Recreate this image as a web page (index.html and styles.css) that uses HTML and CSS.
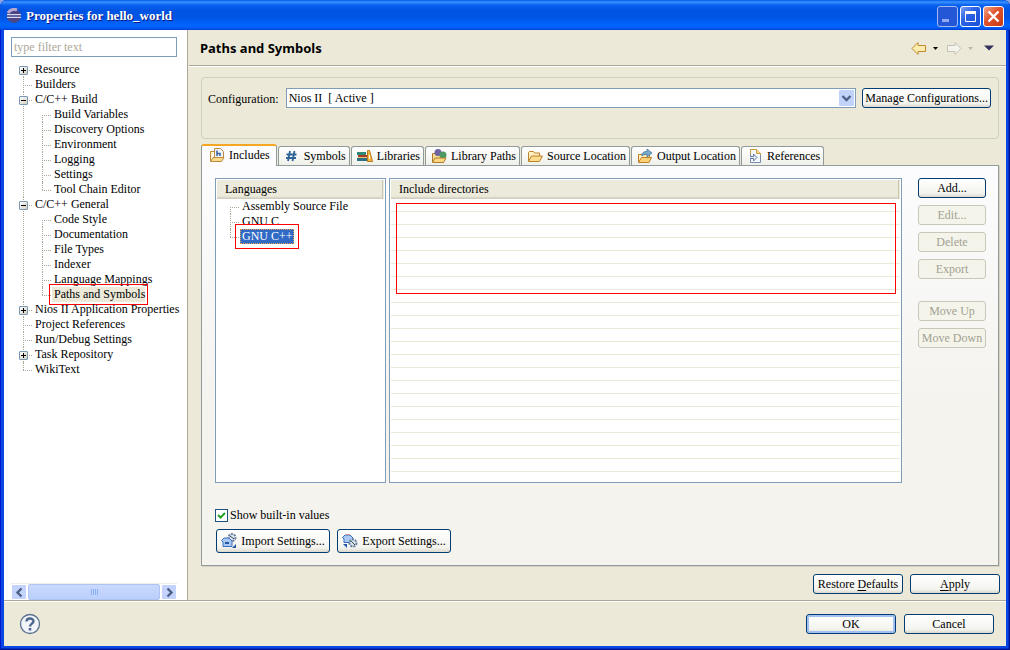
FILE: index.html
```html
<!DOCTYPE html>
<html lang="en">
<head>
<meta charset="utf-8">
<title>Properties for hello_world</title>
<link rel="stylesheet" href="styles.css">
</head>
<body>
<div class="window">
  <header class="titlebar">
    <svg class="logo" width="16" height="16" viewBox="0 0 16 16"><circle cx="8" cy="8" r="7" fill="#4b4787"/><path d="M2 5a7 7 0 0 1 9-3" stroke="#b9a9d0" stroke-width="3" fill="none"/><path d="M1 6.500h14M1 9.500h14" stroke="#d9dcf0"/><path d="M1 8h14" stroke="#7f86bb"/></svg>
    <h1 class="title">Properties for hello_world</h1>
    <button class="caption-button is-dim" aria-label="Minimize"><svg width="19" height="19" viewBox="0 0 19 19"><path d="M4 12h7v3H4z" fill="#8fa9f4"/></svg></button>
    <button class="caption-button" aria-label="Maximize"><svg width="19" height="19" viewBox="0 0 19 19"><path d="M4.500 4.500h10v10h-10z" fill="none" stroke="#fff"/><path d="M4 5.500h11" stroke="#fff" stroke-width="3"/></svg></button>
    <button class="caption-button is-close" aria-label="Close"><svg width="19" height="19" viewBox="0 0 19 19"><path d="M4.500 4.500l10 10M14.500 4.500l-10 10" stroke="#fff" stroke-width="2.400"/></svg></button>
  </header>

  <div class="content">
    <aside class="sidebar">
      <input class="filter" type="text" placeholder="type filter text" aria-label="Filter">
      <ul class="tree">
        <li><span class="row"><button class="toggle" aria-label="Expand"></button>Resource</span></li>
        <li><span class="row">Builders</span></li>
        <li><span class="row"><button class="toggle is-open" aria-label="Collapse"></button>C/C++ Build</span>
          <ul>
            <li><span class="row">Build Variables</span></li>
            <li><span class="row">Discovery Options</span></li>
            <li><span class="row">Environment</span></li>
            <li><span class="row">Logging</span></li>
            <li><span class="row">Settings</span></li>
            <li><span class="row">Tool Chain Editor</span></li>
          </ul>
        </li>
        <li><span class="row"><button class="toggle is-open" aria-label="Collapse"></button>C/C++ General</span>
          <ul>
            <li><span class="row">Code Style</span></li>
            <li><span class="row">Documentation</span></li>
            <li><span class="row">File Types</span></li>
            <li><span class="row">Indexer</span></li>
            <li><span class="row">Language Mappings</span></li>
            <li><span class="row"><span class="current">Paths and Symbols</span></span></li>
          </ul>
        </li>
        <li><span class="row"><button class="toggle" aria-label="Expand"></button>Nios II Application Properties</span></li>
        <li><span class="row">Project References</span></li>
        <li><span class="row">Run/Debug Settings</span></li>
        <li><span class="row"><button class="toggle" aria-label="Expand"></button>Task Repository</span></li>
        <li><span class="row">WikiText</span></li>
      </ul>
      <div class="scrollbar">
        <button class="scroll-button" aria-label="Scroll left"><svg width="13" height="13" viewBox="0 0 13 13"><path d="M8.500 2.500l-4 4 4 4" fill="none" stroke="#4d6185" stroke-width="2.400"/></svg></button>
        <div class="thumb"><i></i><i></i><i></i><i></i></div>
        <button class="scroll-button" aria-label="Scroll right"><svg width="13" height="13" viewBox="0 0 13 13"><path d="M4.500 2.500l4 4-4 4" fill="none" stroke="#4d6185" stroke-width="2.400"/></svg></button>
      </div>
    </aside>

    <main class="page">
      <div class="page-head">
        <h2 class="page-title">Paths and Symbols</h2>
        <button class="nav" aria-label="Back"><svg width="16" height="14" viewBox="0 0 16 14"><path d="M1 7.500L7 1.500V4.500h7.500v6H7v3z" fill="#fdecb0" stroke="#c08a2c"/></svg></button>
        <button class="nav nav-menu" aria-label="Back history"><svg width="5" height="3" viewBox="0 0 5 3"><path d="M0 0h5L2.500 3z" fill="#000"/></svg></button>
        <button class="nav nav-forward" aria-label="Forward"><svg width="16" height="14" viewBox="0 0 16 14"><path d="M15 7.500L9 1.500V4.500H1.500v6H9v3z" fill="#f4f3ec" stroke="#c4c2b8"/></svg></button>
        <button class="nav nav-menu" aria-label="Forward history"><svg width="5" height="3" viewBox="0 0 5 3"><path d="M0 0h5L2.500 3z" fill="#b9b7aa"/></svg></button>
        <button class="nav nav-view" aria-label="View menu"><svg width="10" height="6" viewBox="0 0 10 6"><path d="M0 .5h10L5 5.500z" fill="#33305e"/></svg></button>
      </div>

      <div class="page-body">
        <section class="config">
          <label for="config">Configuration:</label>
          <select id="config" class="select"><option>Nios II&nbsp; [ Active ]</option></select>
          <button class="button manage">Manage Configurations...</button>
        </section>

        <div class="tabs" role="tablist">
          <button class="tab is-active" role="tab" aria-selected="true"><svg width="16" height="16" viewBox="0 0 16 16"><path d="M1.500 14V4.500h4v-2" fill="#fff3c8" stroke="#c08a3c"/><path d="M5.500 1.500h6l3 3v7h-9z" fill="#edf3fb" stroke="#c08a3c"/><path d="M8 3.500v5.500M8 6.500h3V9" stroke="#3a639f" stroke-width="1.500" fill="none"/><path d="M1.500 14.500l2.500-4h11l-2.500 4z" fill="#fbdc8c" stroke="#c08a3c"/></svg>Includes</button>
          <button class="tab" role="tab"><svg width="16" height="16" viewBox="0 0 16 16"><path d="M6 3L4 13M10.500 3L8.500 13M2.500 6.500h10M2 10h10" stroke="#2f6597" stroke-width="1.800" fill="none"/></svg>Symbols</button>
          <button class="tab" role="tab"><svg width="16" height="16" viewBox="0 0 16 16"><path d="M0 4h9v3H0z" fill="#2f8a78"/><path d="M1 7h9v2H1z" fill="#a83a2a"/><path d="M1 9h9v1H1z" fill="#e7c66a"/><path d="M0 10h10v3H0z" fill="#2f6f86"/><path d="M10.500 2.500h2l3 11h-5z" fill="#f3b73f" stroke="#b9781e"/><path d="M12.500 7v4" stroke="#fff"/></svg>Libraries</button>
          <button class="tab" role="tab"><svg width="16" height="16" viewBox="0 0 16 16"><path d="M1.500 14V5.500h5l1 1.500h6v3" fill="#f8dc91" stroke="#b07a2c"/><circle cx="7" cy="4.500" r="3.500" fill="#6e62a3"/><circle cx="12" cy="7" r="3.500" fill="#4c9a62"/><path d="M1.500 14.500l2.500-4.500h11l-2.500 4.500z" fill="#fbd77f" stroke="#b07a2c"/></svg>Library Paths</button>
          <button class="tab" role="tab"><svg width="16" height="16" viewBox="0 0 16 16"><path d="M1.500 13V4.500l1-1h4l1 1.500h5v3" fill="#fff1c0" stroke="#c08028"/><path d="M1.500 13.500L4.500 8h11l-3 5.500z" fill="#fbdc8c" stroke="#c08028"/></svg>Source Location</button>
          <button class="tab" role="tab"><svg width="16" height="16" viewBox="0 0 16 16"><path d="M1.500 14V6.500h11v3" fill="#fff1c0" stroke="#c08028"/><path d="M1.500 14.500L4.500 9.500h10l-2.500 5z" fill="#fbd27a" stroke="#c08028"/><path d="M5 6c1-2 2.500-2.500 5-2.500V1l5 4-5 4V6.500C8 6.500 6.500 6.500 5 8z" fill="#79aacb" stroke="#4a7a9d" stroke-width=".8"/></svg>Output Location</button>
          <button class="tab" role="tab"><svg width="16" height="16" viewBox="0 0 16 16"><path d="M3.500 1.500h6l4 4v9h-10z" fill="#f4f8ff" stroke="#7b8ba8"/><path d="M3.500 6V1.500h6l4 4V7" fill="none" stroke="#cf9b3e"/><path d="M9.500 1.500v4h4" fill="#f6dd9a" stroke="#cf9b3e"/><path d="M3 8.500h3.500v-2.500L10 9.500l-3.500 3.500v-2.500H3" fill="#dfe7f3" stroke="#6d7f9f"/></svg>References</button>
        </div>

        <section class="panel">
          <div class="columns">
            <div class="list languages">
              <div class="list-head">Languages</div>
              <ul class="tree language-tree">
                <li><span class="row">Assembly Source File</span></li>
                <li><span class="row">GNU C</span></li>
                <li><span class="row"><span class="selected">GNU C++</span></span></li>
              </ul>
            </div>
            <div class="list directories">
              <div class="list-head">Include directories</div>
              <div class="lines"><div class="callout"></div></div>
            </div>
            <div class="actions">
              <button class="button">Add...</button>
              <button class="button" disabled>Edit...</button>
              <button class="button" disabled>Delete</button>
              <button class="button" disabled>Export</button>
              <button class="button move-up" disabled>Move Up</button>
              <button class="button" disabled>Move Down</button>
            </div>
          </div>
          <div class="options">
            <label class="check"><input type="checkbox" checked>Show built-in values</label>
            <div class="transfer">
              <button class="button"><svg width="16" height="16" viewBox="0 0 16 16"><circle cx="11" cy="4.500" r="3.500" fill="#dce6ee" stroke="#667f99" stroke-width="2" stroke-dasharray="2 1"/><path d="M9 3l4 3" stroke="#345"/><path d="M.5 7.500L3 5h5l3 3v5.500h-9V9z" fill="#a9c8f2" stroke="#3a6fbe"/><path d="M4 10h4" stroke="#2458a4" stroke-width="2"/><path d="M15 11v4h-4z" fill="#2458a4"/></svg>Import Settings...</button>
              <button class="button"><svg width="16" height="16" viewBox="0 0 16 16"><path d="M.5 4.500L3 2h5l3 3v4.500H2V6z" fill="#a9c8f2" stroke="#3a6fbe"/><path d="M4 1.500h4" stroke="#d7908c"/><circle cx="11" cy="10" r="3.500" fill="#dce6ee" stroke="#667f99" stroke-width="2" stroke-dasharray="2 1"/><path d="M9 8l4 4" stroke="#345"/><path d="M1 11h4v4z" fill="#2458a4"/></svg>Export Settings...</button>
            </div>
          </div>
        </section>

        <div class="page-actions">
          <button class="button"><span>Restore <u>D</u>efaults</span></button>
          <button class="button"><span><u>A</u>pply</span></button>
        </div>
      </div>
    </main>
  </div>

  <footer class="footer">
    <button class="help" aria-label="Help"><svg width="22" height="22" viewBox="0 0 22 22"><circle cx="11" cy="11" r="9.500" fill="#f1f4f8" stroke="#5b7290" stroke-width="1.300"/><path d="M7.500 8.500C7.500 4.500 14.500 4.500 14.500 8.300 14.500 10.500 11 10.800 11 13.500" fill="none" stroke="#4e678c" stroke-width="2.400"/><path d="M9.700 15h2.600v2.500H9.700z" fill="#4e678c"/></svg></button>
    <button class="button is-default">OK</button>
    <button class="button">Cancel</button>
  </footer>
</div>
</body>
</html>
```

FILE: styles.css
```css
* { box-sizing: border-box; }

body {
  margin: 0;
  background: #8aa5e0;
  color: #000;
  font: 12px/15px "Liberation Serif", "Times New Roman", serif;
}

button, input, select { font: inherit; color: inherit; }
button { padding: 0; border: 0; background: none; }
svg { display: block; flex: none; }
ul { margin: 0; padding: 0; list-style: none; }
u { text-underline-offset: 2px; }

/* Window frame */
.window {
  display: flex;
  flex-direction: column;
  min-height: 100vh;
  padding: 0 4px 4px;
  border-radius: 7px 7px 0 0;
  background: #0a46e4;
  box-shadow: inset -1px -1px #00138c, inset 1px 0 #0019cf, inset -2px -2px #0030c8;
}

.titlebar {
  display: flex;
  align-items: center;
  gap: 2px;
  height: 30px;
  margin: 0 -4px;
  padding: 2px 6px 0;
  border-radius: 7px 7px 0 0;
  background: linear-gradient(#0058e6 0, #3a93ff 2px, #0a62f0 5px, #0054e3 10px, #0055e5 18px, #0066ff 25px, #005cf5 28px, #003dd0);
}

.title {
  flex: 1;
  margin: 0 0 0 2px;
  color: #fff;
  font-size: 13px;
  line-height: 16px;
  text-shadow: 1px 1px #0a1883;
}

.caption-button {
  width: 21px;
  height: 21px;
  border: 1px solid #fff;
  border-radius: 3px;
  background: linear-gradient(135deg, #7a9ff5, #2c62e4 40%, #1b4fd6);
}
.caption-button.is-dim { border-color: #a5b8ee; background: #2457d6; }
.caption-button.is-close { background: linear-gradient(135deg, #f0a58c, #e0512c 45%, #c43c14); }

.content { display: flex; flex: 1; background: #ece9d8; }

/* Navigation tree */
.sidebar {
  display: flex;
  flex-direction: column;
  width: 184px;
  margin-right: 1px;
  padding: 7px 10px 0 7px;
  border-right: 1px solid #aca899;
  background: #fff;
}

.filter {
  width: 100%;
  height: 20px;
  margin-bottom: 5px;
  padding: 1px 2px;
  border: 1px solid #7f9db9;
  background: #fff;
}
.filter::placeholder { color: #aca899; opacity: 1; }

.tree { flex: 1; padding-left: 12px; }
.tree li { position: relative; }
.tree li::before {
  content: "";
  position: absolute;
  top: 0;
  bottom: 0;
  left: 0;
  border-left: 1px dotted #aca899;
}
.tree li:first-child::before { top: 8px; }
.tree li:last-child::before { bottom: auto; height: 8px; }
.tree ul { padding-left: 19px; }

.row {
  display: block;
  position: relative;
  padding-left: 12px;
  white-space: nowrap;
}
.row::before {
  content: "";
  position: absolute;
  top: 8px;
  left: 0;
  width: 9px;
  border-top: 1px dotted #aca899;
}

.toggle {
  position: absolute;
  top: 4px;
  left: -4px;
  width: 9px;
  height: 9px;
  border: 1px solid #7898b5;
  border-radius: 1px;
  background:
    linear-gradient(#000, #000) center / 5px 1px no-repeat,
    linear-gradient(#000, #000) center / 1px 5px no-repeat,
    linear-gradient(135deg, #fff, #d2ccbc);
}
.toggle.is-open {
  background:
    linear-gradient(#000, #000) center / 5px 1px no-repeat,
    linear-gradient(135deg, #fff, #d2ccbc);
}

.current {
  display: inline-block;
  margin-left: -2px;
  padding-left: 2px;
  background: #ece9d8;
  outline: 1px solid #f00;
  outline-offset: 2px;
}

.scrollbar { display: flex; gap: 1px; height: 17px; border-top: 1px solid #eeede5; }
.scroll-button {
  display: grid;
  place-items: center;
  width: 16px;
  border: 1px solid #fff;
  border-radius: 2px;
  background: #c3d3fd;
}
.thumb {
  display: flex;
  flex: 1;
  align-items: center;
  justify-content: center;
  gap: 1px;
  border: 1px solid #b0c4f2;
  border-radius: 2px;
  background: linear-gradient(#cad9fe, #bacffc);
}
.thumb i { width: 1px; height: 6px; background: #8cb0f8; }

/* Page */
.page { display: flex; flex: 1; flex-direction: column; min-width: 0; }

.page-head {
  display: flex;
  align-items: center;
  height: 36px;
  padding: 1px 12px 0 11px;
  border-bottom: 1px solid #aca899;
  box-shadow: 0 1px #fff;
}
.page-title {
  flex: 1;
  margin: 0;
  font: bold 13px/16px "Noto Sans", sans-serif;
}
.nav-menu { margin-left: 6px; }
.nav-forward { margin-left: 8px; }
.nav-view { margin-left: 11px; }

.page-body { display: flex; flex: 1; flex-direction: column; padding: 11px 7px 6px 12px; }

.config {
  display: flex;
  align-items: flex-start;
  gap: 6px;
  height: 62px;
  padding: 10px 7px 0 6px;
  border: 1px solid #d0d0bf;
  border-radius: 4px;
}
.config label { margin-top: 4px; margin-right: 1px; }

.select {
  flex: 1;
  height: 20px;
  padding: 0 2px;
  appearance: none;
  border: 1px solid #7f9db9;
  border-radius: 0;
  background:
    url("data:image/svg+xml,%3Csvg xmlns='http://www.w3.org/2000/svg' width='15' height='16'%3E%3Crect width='15' height='16' rx='1' fill='%23c1d2fb'/%3E%3Cpath d='M3.500 6l4 4 4-4' fill='none' stroke='%234d6185' stroke-width='2.400'/%3E%3C/svg%3E") right 1px center no-repeat,
    #fff;
}

.button {
  display: flex;
  align-items: center;
  justify-content: center;
  gap: 4px;
  height: 20px;
  padding: 0 2px;
  border: 1px solid #003c74;
  border-radius: 3px;
  background: linear-gradient(#fff, #f3f3ee 80%, #dcd8cd);
  white-space: nowrap;
}
.button:disabled { border-color: #c9c7ba; background: #f5f4ea; color: #a1a192; }
.button.is-default { box-shadow: inset 0 0 0 2px #a4bff2; }

/* Tabs */
.tabs { display: flex; align-items: flex-end; gap: 1px; margin-top: 5px; }
.tab {
  display: flex;
  align-items: center;
  gap: 4px;
  height: 19px;
  padding: 0 3px 0 5px;
  border: 1px solid #919b9c;
  border-bottom: 0;
  border-radius: 3px 3px 0 0;
  background: linear-gradient(#fff, #f0f0ea);
  white-space: nowrap;
}
.tab.is-active {
  position: relative;
  height: 22px;
  margin-bottom: -1px;
  padding: 0 6px 2px 7px;
  border-top: 2px solid #f5a623;
  background: #fcfcfe;
}

.panel {
  display: flex;
  flex: 1;
  flex-direction: column;
  padding: 12px 12px 12px 13px;
  border: 1px solid #919b9c;
  background: linear-gradient(#fcfcfe, #f4f3ee 60%);
  box-shadow: 1px 1px #d5d2c2;
}
.columns { display: flex; flex: 1; }

.list {
  display: flex;
  flex-direction: column;
  padding: 1px;
  border: 1px solid #7f9db9;
  background: #fff;
}
.languages { width: 171px; margin-right: 3px; }
.directories { flex: 1; min-width: 0; margin-right: 16px; }

.list-head {
  height: 19px;
  padding: 2px 8px;
  background: linear-gradient(#ebeadb 85%, #cbc7b8);
  box-shadow: inset -1px 0 #ebeadb, inset -2px 0 #c7c5b2;
}

.language-tree { padding-left: 13px; }
.selected {
  display: inline-block;
  margin-left: -2px;
  padding-left: 1px;
  border: 1px dotted #e8a04c;
  background: #316ac5;
  color: #fff;
  line-height: 13px;
  outline: 1px solid #f00;
  outline-offset: 4px;
}

.lines {
  flex: 1;
  padding: 4px 4px 0 5px;
  background: repeating-linear-gradient(#fff 0 12px, #ece9d8 12px 13px);
}
.callout { height: 91px; border: 1px solid #f00; }

.actions { display: flex; flex-direction: column; gap: 7px; width: 68px; }
.move-up { margin-top: 15px; }

.options { padding-top: 25px; }
.check { display: flex; align-items: center; gap: 2px; }
.check input {
  width: 13px;
  height: 13px;
  margin: 0;
  appearance: none;
  border: 1px solid #1c5180;
  background:
    url("data:image/svg+xml,%3Csvg xmlns='http://www.w3.org/2000/svg' width='11' height='11'%3E%3Cpath d='M2 5l2.500 2.500L9 3' fill='none' stroke='%2321a121' stroke-width='2'/%3E%3C/svg%3E"),
    #fff;
}
.transfer { display: flex; gap: 7px; margin: 6px 0 0 1px; }
.transfer .button { height: 24px; width: 114px; }

.page-actions { display: flex; justify-content: flex-end; gap: 7px; margin: 8px -1px 0 0; }
.page-actions .button { width: 90px; }

/* Footer */
.footer {
  display: flex;
  gap: 8px;
  height: 46px;
  padding: 13px 12px 0 15px;
  border-top: 1px solid #aca899;
  background: #ece9d8;
  box-shadow: inset 0 1px #fff;
}
.footer .button { width: 90px; }
.help { height: 22px; margin: -1px auto 0 0; }
```
